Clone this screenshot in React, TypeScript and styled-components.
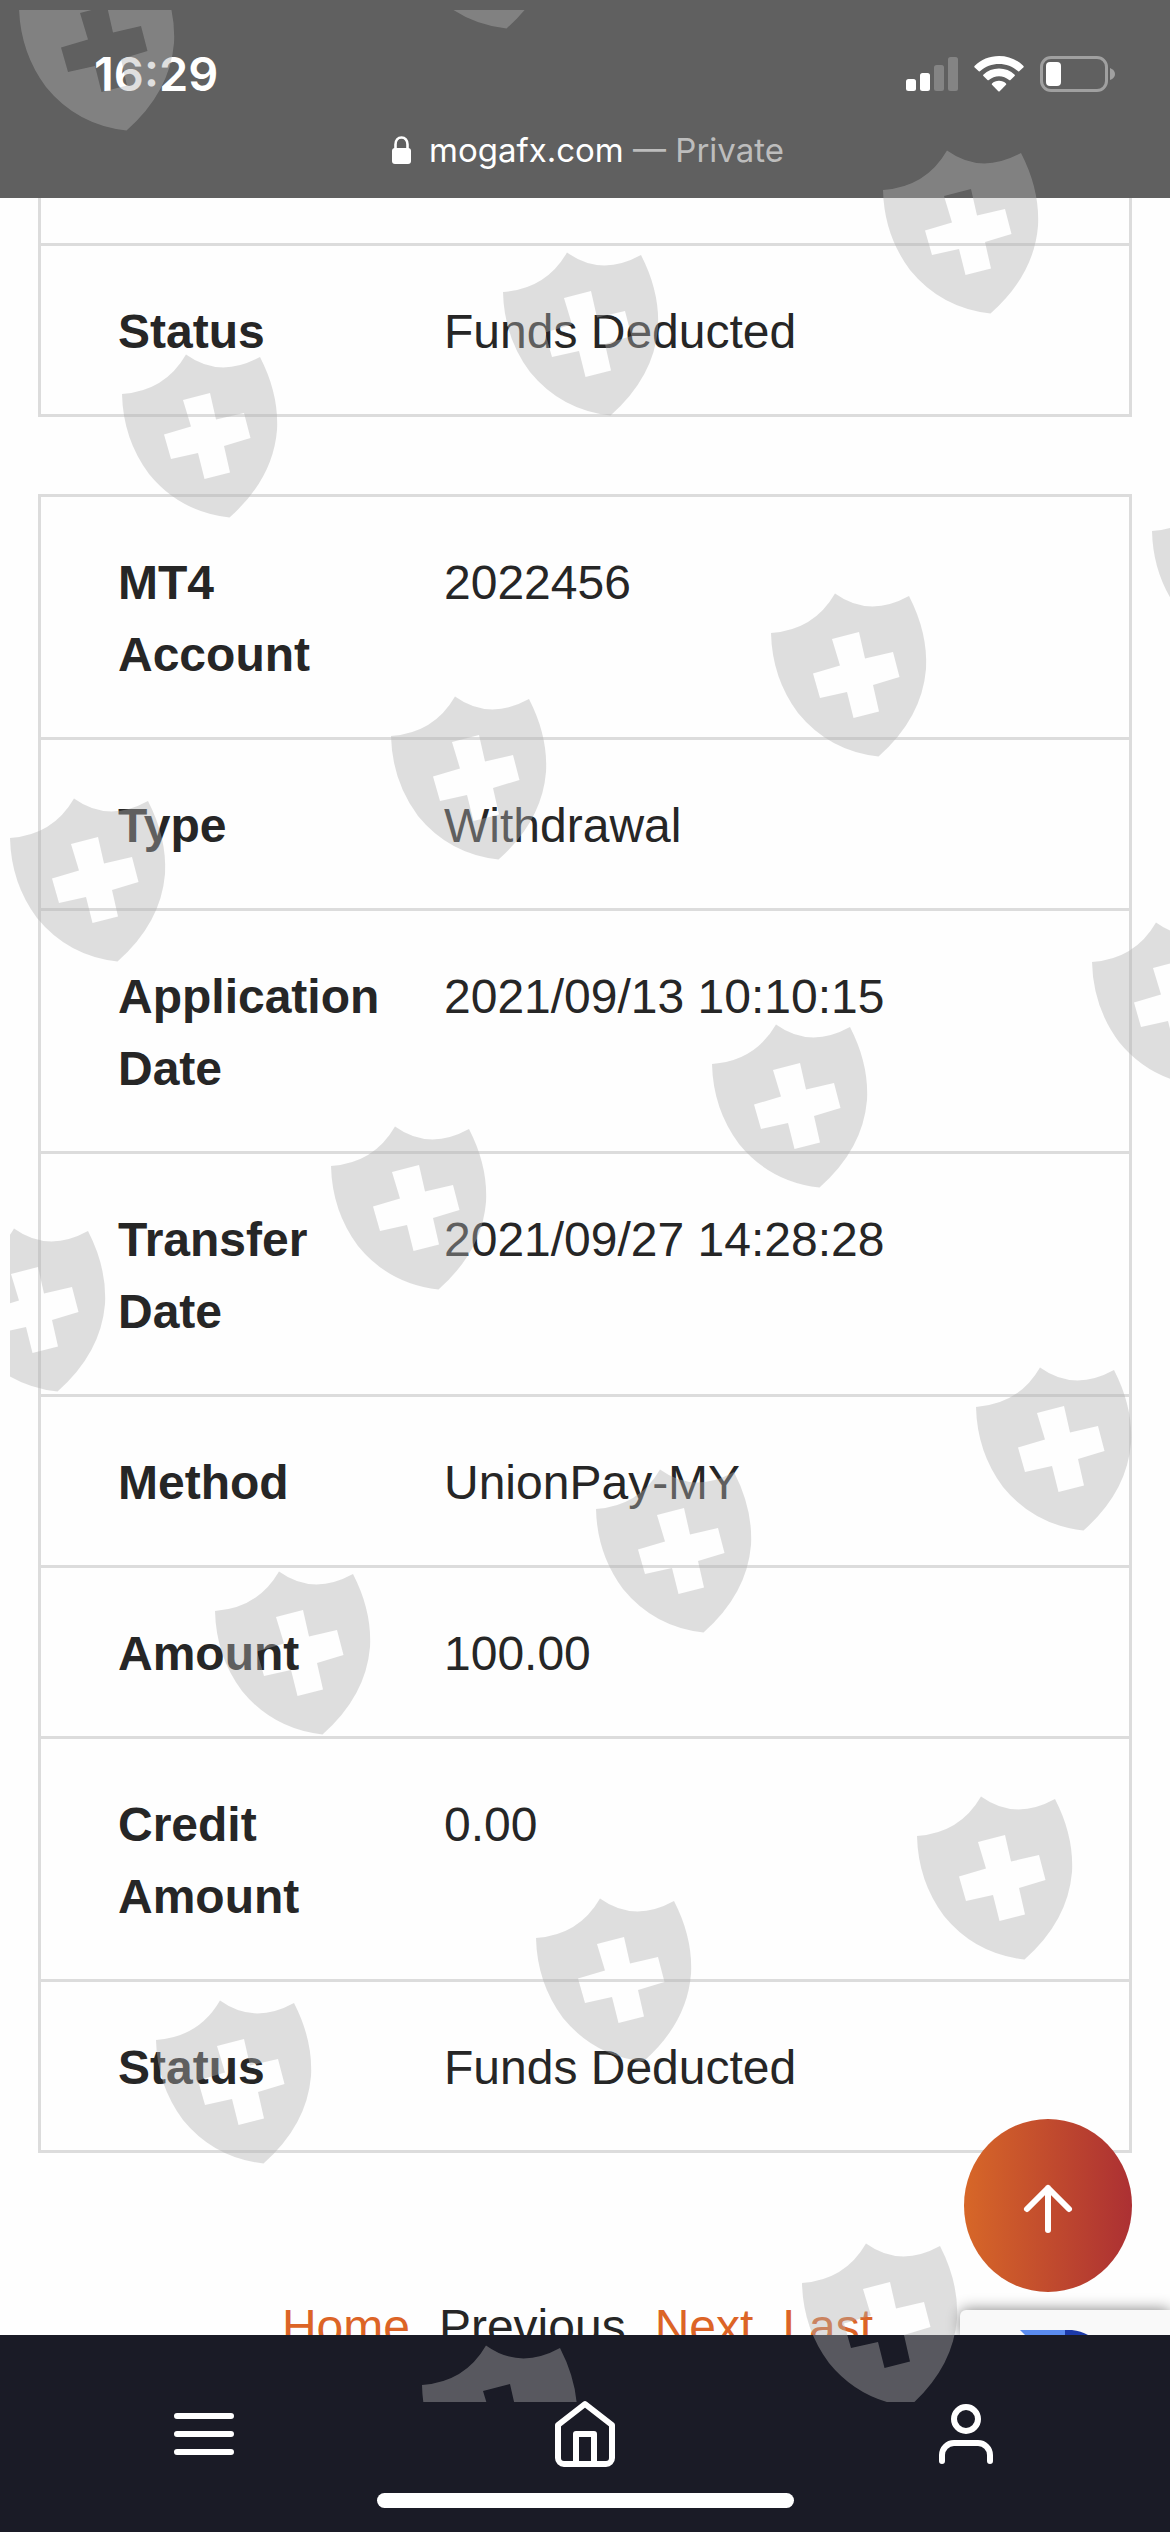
import React from "react";
import styled, { createGlobalStyle } from "styled-components";

const GlobalStyle = createGlobalStyle`
  * { box-sizing: border-box; }
  body { margin: 0; background: #fff; }
`;

const Screen = styled.div`
  position: relative;
  display: flex;
  flex-direction: column;
  height: 100vh;
  overflow: hidden;
  background: #fefefe;
  color: #262626;
  font-family: "Liberation Sans", Arial, sans-serif;
  font-size: 48px;
  line-height: 72px;
`;

const TopBar = styled.header`
  flex: none;
  padding: 44px 54px 24px 94px;
  background: #606060;
  color: #fff;
  font-family: Inter, sans-serif;
`;

const StatusRow = styled.div`
  display: flex;
  align-items: center;
  justify-content: space-between;
  height: 60px;
`;

const Clock = styled.time`
  font-size: 47px;
  font-weight: 600;
  line-height: 60px;
`;

const Indicators = styled.div`
  display: flex;
  align-items: center;
  gap: 16px;
`;

const AddressRow = styled.div`
  display: flex;
  align-items: center;
  justify-content: center;
  gap: 18px;
  height: 48px;
  margin: 22px 0 0 -34px;
  font-size: 33px;
  line-height: 48px;
`;

const Muted = styled.span`
  color: #bdbdbd;
`;

const Content = styled.main`
  position: relative;
  flex: 1;
  min-height: 0;
  overflow: hidden;
  padding: 0 38px;
`;

const RecordTable = styled.table<{ $continued?: boolean }>`
  width: 100%;
  margin-bottom: 77px;
  border: 3px solid #dcdcdc;
  border-top-width: ${(p) => (p.$continued ? "0" : "3px")};
  border-spacing: 0;
  border-collapse: separate;
`;

const Row = styled.tr`
  & + & > * {
    border-top: 3px solid #dcdcdc;
  }
`;

const Label = styled.th`
  width: 403px;
  padding: 50px 50px 46px 77px;
  font-weight: 700;
  text-align: left;
  vertical-align: top;
`;

const Value = styled.td`
  padding: 50px 24px 46px 0;
  vertical-align: top;
`;

const HiddenPart = styled.td`
  height: 45px;
  padding: 0;
`;

const Pager = styled.nav`
  display: flex;
  justify-content: center;
  gap: 29px;
  margin-top: 138px;
  padding-right: 15px;
`;

const PagerLink = styled.a`
  color: #dc6426;
  text-decoration: none;
`;

const ScrollTop = styled.button`
  position: absolute;
  right: 38px;
  bottom: 43px;
  display: flex;
  align-items: center;
  justify-content: center;
  width: 168px;
  height: 173px;
  padding: 6px 0 0;
  border: 0;
  border-radius: 50%;
  background: linear-gradient(90deg, #d76728, #ac3033);
`;

const CaptchaBadge = styled.aside`
  position: absolute;
  right: 0;
  bottom: 0;
  width: 210px;
  height: 25px;
  padding: 20px 0 0 60px;
  border-radius: 6px 0 0 0;
  background: #f9f9f9;
  box-shadow: 0 0 15px #808080;
`;

const CaptchaLogo = styled.svg`
  display: block;
`;

const BottomBar = styled.nav`
  flex: none;
  padding: 63px 14px 24px;
  background: #1a1b26;
`;

const Tabs = styled.div`
  display: grid;
  grid-template-columns: repeat(3, 1fr);
  justify-items: center;
`;

const TabButton = styled.button`
  height: 72px;
  padding: 0;
  border: 0;
  background: none;
  line-height: 0;
`;

const HomeIndicator = styled.div`
  width: 417px;
  height: 15px;
  margin: 23px auto 0;
  border-radius: 8px;
  background: #fff;
`;

const Watermark = styled.svg`
  position: absolute;
  left: 10px;
  top: 10px;
  pointer-events: none;
`;

const LineIcon = styled.svg`
  width: 72px;
  height: 72px;
  fill: none;
  stroke: #fff;
  stroke-width: 2;
  stroke-linecap: round;
  stroke-linejoin: round;
`;

const shieldSpots: [number, number][] = [
  [19, 7], [399, -95],
  [122, 394], [503, 292], [883, 190],
  [10, 838], [391, 736], [771, 633], [1152, 531],
  [-50, 1268], [331, 1166], [712, 1064], [1092, 962],
  [215, 1611], [596, 1509], [976, 1407],
  [156, 2040], [536, 1938], [917, 1836],
  [422, 2385], [802, 2283],
];

function Shields() {
  return (
    <Watermark width="1160" height="2392" viewBox="10 10 1160 2392" aria-hidden="true">
      <defs>
        <path
          id="shield"
          fillRule="evenodd"
          d="M0 0Q43 -3 64 -39.5Q98 -15 138 -37Q157 0 155 36Q151 85 107.500 123.500Q58 118 27 80Q1 45 0 0ZM61 6L69 32.500L42 40.500L49 65L76 59L82.500 85L108 78.500L102 52L128.500 44L122 19L94 25.500L88 -1Z"
        />
      </defs>
      {shieldSpots.map(([x, y]) => (
        <use key={`${x},${y}`} href="#shield" x={x} y={y} fill="rgb(177,177,177)" fillOpacity={0.41} />
      ))}
    </Watermark>
  );
}

const records: [string, string][] = [
  ["MT4 Account", "2022456"],
  ["Type", "Withdrawal"],
  ["Application Date", "2021/09/13 10:10:15"],
  ["Transfer Date", "2021/09/27 14:28:28"],
  ["Method", "UnionPay-MY"],
  ["Amount", "100.00"],
  ["Credit Amount", "0.00"],
  ["Status", "Funds Deducted"],
];

export default function App() {
  return (
    <Screen>
      <GlobalStyle />
      <TopBar>
        <StatusRow>
          <Clock>16:29</Clock>
          <Indicators>
            <svg width="52" height="36" viewBox="0 0 52 36" fill="#fff">
              <rect x="0" y="23" width="10" height="12" rx="2.500" />
              <rect x="14" y="17" width="10" height="18" rx="2.500" />
              <rect x="28" y="9" width="10" height="26" rx="2.500" fill="#848484" />
              <rect x="42" y="1" width="10" height="34" rx="2.500" fill="#848484" />
            </svg>
            <svg width="50" height="36" viewBox="0 0 50 36" fill="#fff">
              <path d="M25 0C34.500 0 43 3.500 49.500 10Q50 10.800 49.300 11.500L45.200 15.200Q44.500 15.700 43.800 15.100C38.700 10.400 32 8 25 8S11.300 10.400 6.200 15.100Q5.500 15.700 4.800 15.200L.7 11.500Q0 10.800.5 10C7 3.500 15.500 0 25 0Z" />
              <path d="M25 12.500C31 12.500 36.500 14.700 40.700 18.700Q41.300 19.400 40.600 20L36.500 24Q35.800 24.600 35.100 24C32.300 21.500 28.800 20.200 25 20.200S17.700 21.500 14.900 24Q14.200 24.600 13.500 24L9.400 20Q8.700 19.400 9.300 18.700C13.500 14.700 19 12.500 25 12.500Z" />
              <path d="M25 24.800C27.800 24.800 30.200 25.700 32 27.400Q32.600 28 32 28.700L25.700 35.200Q25 35.800 24.300 35.200L18 28.700Q17.400 28 18 27.400C19.800 25.700 22.200 24.800 25 24.800Z" />
            </svg>
            <svg width="76" height="36" viewBox="0 0 76 36">
              <rect x="1.500" y="1.500" width="65" height="33" rx="9.500" fill="none" stroke="#a0a0a0" strokeWidth="3" />
              <rect x="6" y="6" width="15" height="24" rx="4" fill="#fff" />
              <path d="M70 12Q75 14 75 18T70 24Z" fill="#a0a0a0" />
            </svg>
          </Indicators>
        </StatusRow>
        <AddressRow>
          <svg width="19" height="28" viewBox="0 0 19 28">
            <rect x="0" y="12" width="19" height="16" rx="3" fill="#fff" />
            <path d="M3.500 13V8.500C3.500 4 6 1.500 9.500 1.500S15.500 4 15.500 8.500V13" fill="none" stroke="#fff" strokeWidth="2.600" />
          </svg>
          <span>
            mogafx.com <Muted>— Private</Muted>
          </span>
        </AddressRow>
      </TopBar>

      <Content>
        <RecordTable $continued>
          <tbody>
            <Row>
              <HiddenPart colSpan={2} />
            </Row>
            <Row>
              <Label scope="row">Status</Label>
              <Value>Funds Deducted</Value>
            </Row>
          </tbody>
        </RecordTable>

        <RecordTable>
          <tbody>
            {records.map(([label, value]) => (
              <Row key={label}>
                <Label scope="row">{label}</Label>
                <Value>{value}</Value>
              </Row>
            ))}
          </tbody>
        </RecordTable>

        <Pager aria-label="Pages">
          <PagerLink href="#home">Home</PagerLink>
          <span>Previous</span>
          <PagerLink href="#next">Next</PagerLink>
          <PagerLink href="#last">Last</PagerLink>
        </Pager>

        <CaptchaBadge>
          <CaptchaLogo width="76" height="5" viewBox="0 0 76 5">
            <path d="M0 0H45V5H5Z" fill="#5b8cf0" />
            <path d="M45 0H52Q61 1 68 5H45Z" fill="#1c3aa9" />
          </CaptchaLogo>
        </CaptchaBadge>
        <ScrollTop type="button" aria-label="Back to top">
          <LineIcon viewBox="0 0 24 24">
            <path d="M12 19V5M5 12l7-7 7 7" />
          </LineIcon>
        </ScrollTop>
      </Content>

      <BottomBar>
        <Tabs>
          <TabButton type="button" aria-label="Menu">
            <LineIcon viewBox="0 0 24 24">
              <path d="M3 6h18M3 12h18M3 18h18" />
            </LineIcon>
          </TabButton>
          <TabButton type="button" aria-label="Home">
            <LineIcon viewBox="0 0 24 24">
              <path d="M3 9l9-7 9 7v11a2 2 0 0 1-2 2H5a2 2 0 0 1-2-2zM9 22V12h6v10" />
            </LineIcon>
          </TabButton>
          <TabButton type="button" aria-label="Account">
            <LineIcon viewBox="0 0 24 24">
              <path d="M20 21v-2a4 4 0 0 0-4-4H8a4 4 0 0 0-4 4v2" />
              <circle cx="12" cy="7" r="4" />
            </LineIcon>
          </TabButton>
        </Tabs>
        <HomeIndicator />
      </BottomBar>
      <Shields />
    </Screen>
  );
}
